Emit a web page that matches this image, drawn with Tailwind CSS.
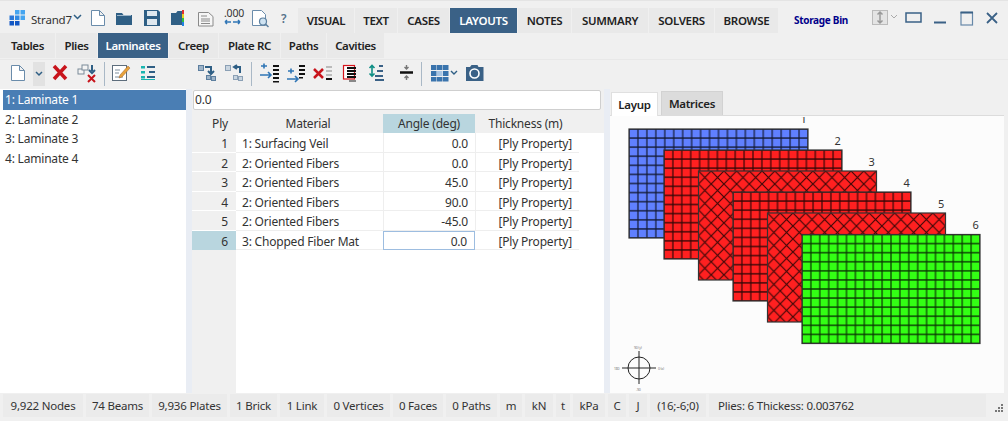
<!DOCTYPE html>
<html lang="en">
<head>
<meta charset="UTF-8">
<title>Strand7 - Laminates</title>
<script src="https://cdn.jsdelivr.net/npm/@tailwindcss/browser@4"></script>
</head>
<body class="bg-[#f0f0f0]">
<div class="w-[1008px] h-[421px] overflow-hidden flex flex-col bg-[#f0f0f0] text-[#222] text-[12px] tracking-[-0.2px] font-['Noto_Sans',sans-serif]">

  <!-- title bar -->
  <div class="h-[33px] flex items-end border-t border-[#e4e4e4]">
    <div class="w-[298px] h-[32px] relative">
      <svg width="298" height="32" viewBox="0 1 298 32">
        <!-- logo -->
        <rect x="15" y="10" width="4.500" height="4.500" fill="#45a5f0"/><rect x="20.500" y="10" width="4.500" height="4.500" fill="#45a5f0"/>
        <rect x="20.500" y="15.500" width="4.500" height="4.500" fill="#45a5f0"/><rect x="15" y="15.500" width="4.500" height="4.500" fill="#2f8ae4"/>
        <rect x="9.500" y="15.500" width="4.500" height="4.500" fill="#2a78d8"/>
        <rect x="9.500" y="21" width="4.500" height="4.500" fill="#1257c4"/><rect x="15" y="21" width="4.500" height="4.500" fill="#1257c4"/>
        <!-- new -->
        <path d="M91.500 10.500h8l5 5v10h-13z M99.500 10.500v5h5" fill="#fff" stroke="#6a8cab" stroke-width="1"/>
        <!-- open -->
        <path d="M116 13h6l1.500 2h8.500v10h-16z" fill="#2f5f85"/><path d="M117 15.500h14" stroke="#9db6ca"/>
        <!-- save -->
        <path d="M144 10h14l2 2v14h-16z" fill="#2f5f85"/><rect x="147" y="11" width="10" height="5" fill="#dfe8ef"/><rect x="147" y="19" width="10" height="6" fill="#dfe8ef"/>
        <!-- colour folder -->
        <path d="M171 13h5l1.500-2h5v14h-11.500z" fill="#2f5f85"/>
        <rect x="182" y="10" width="2" height="4" fill="#e03030"/><rect x="182" y="14" width="2" height="4" fill="#e8d020"/><rect x="182" y="18" width="2" height="4" fill="#30c040"/><rect x="182" y="22" width="2" height="4" fill="#2080e0"/>
        <!-- report -->
        <path d="M198.500 12.500h10l4.500 4v9.500h-14.500z" fill="#f6f6f6" stroke="#8a8a8a"/><path d="M201 16h6M201 19h9M201 21h9M201 23.500h9" stroke="#8a8a8a"/>
        <!-- number format -->
        <path d="M225 22h6M225 22l2-2M225 22l2 2M233 22h7M240 22l-2-2M240 22l-2 2" fill="none" stroke="#2f75b5" stroke-width="1.500"/>
        <!-- doc search -->
        <path d="M252.500 10.500h9l4 4v11h-13z" fill="#fff" stroke="#6a8cab"/><circle cx="263" cy="21.500" r="3.500" fill="#cfe3f2" stroke="#5b7f9f" stroke-width="1.200"/><path d="M265.500 24l3 3" stroke="#5b7f9f" stroke-width="1.500"/>
      </svg>
      <span class="absolute left-[31px] top-[10px] text-[11.500px] text-[#333]">Strand7</span>
      <svg class="absolute left-[73px] top-[13px]" width="9" height="6" viewBox="0 0 9 6"><path d="M1 1l3.500 3.500L8 1" fill="none" stroke="#2f5f85" stroke-width="1.500"/></svg>
      <span class="absolute left-[224px] top-[6px] text-[10.500px] leading-[12px] text-[#333]">.000</span>
      <span class="absolute left-[281px] top-[9px] text-[12px] text-[#56708a] font-semibold">?</span>
    </div>
    <div class="flex h-[25px] items-stretch font-semibold text-[11.500px] tracking-[-0.3px] gap-px">
      <div class="w-[56px] flex items-center justify-center bg-[#e9e9e9]">VISUAL</div>
      <div class="w-[42px] flex items-center justify-center bg-[#e9e9e9]">TEXT</div>
      <div class="w-[51px] flex items-center justify-center bg-[#e9e9e9]">CASES</div>
      <div class="w-[67px] flex items-center justify-center bg-[#3a6186] text-white">LAYOUTS</div>
      <div class="w-[53px] flex items-center justify-center bg-[#e9e9e9]">NOTES</div>
      <div class="w-[76px] flex items-center justify-center bg-[#e9e9e9]">SUMMARY</div>
      <div class="w-[65px] flex items-center justify-center bg-[#e9e9e9]">SOLVERS</div>
      <div class="w-[63px] flex items-center justify-center bg-[#e9e9e9]">BROWSE</div>
    </div>
    <div class="h-[25px] w-[76px] ml-[5px] flex items-center justify-center font-bold text-[10px] tracking-[-0.3px] text-[#00008b]">Storage Bin</div>
    <svg class="self-start mt-[8px] ml-[13px]" width="130" height="18" viewBox="0 0 130 18">
      <rect x="0.500" y="1.500" width="15" height="14" fill="#e4e4e4" stroke="#bbb"/>
      <path d="M8 3v11M5.500 5.500L8 3l2.500 2.500M5.500 11.500L8 14l2.500-2.500" fill="none" stroke="#999" stroke-width="1.500"/>
      <path d="M19 6l3 3 3-3" fill="none" stroke="#aaa"/>
      <rect x="34" y="4" width="15" height="9" fill="none" stroke="#3a6186" stroke-width="1.500"/>
      <path d="M62 13.500h12" stroke="#3a6186" stroke-width="2"/>
      <rect x="89" y="3.500" width="11.500" height="12.500" fill="none" stroke="#6688a8" stroke-width="1.200"/><path d="M88.500 3.500h12.500" stroke="#3a6186" stroke-width="2"/>
      <path d="M115 4l10 10M125 4l-10 10" stroke="#3a6186" stroke-width="1.800"/>
    </svg>
  </div>

  <!-- sub tabs -->
  <div class="h-[27px] flex items-stretch font-semibold text-[11.500px] tracking-[-0.4px] gap-px pb-px border-b border-[#e8e8e8]">
    <div class="w-[55px] flex items-center justify-center bg-[#e9e9e9]">Tables</div>
    <div class="w-[41px] flex items-center justify-center bg-[#e9e9e9]">Plies</div>
    <div class="w-[70px] flex items-center justify-center bg-[#3a6186] text-white">Laminates</div>
    <div class="w-[49px] flex items-center justify-center bg-[#e9e9e9]">Creep</div>
    <div class="w-[61px] flex items-center justify-center bg-[#e9e9e9]">Plate RC</div>
    <div class="w-[45px] flex items-center justify-center bg-[#e9e9e9]">Paths</div>
    <div class="w-[57px] flex items-center justify-center bg-[#e9e9e9]">Cavities</div>
  </div>

  <!-- toolbar icons -->
  <div class="h-[29px] flex">
    <svg width="186" height="29" viewBox="0 60 186 29">
      <path d="M11.500 65.500h8l5 5v10h-13z M19.500 65.500v5h5" fill="#fff" stroke="#6a8cab"/>
      <rect x="33" y="62" width="12" height="24" fill="#e2e2e2"/>
      <path d="M36 72l3 3 3-3" fill="none" stroke="#2f5f85" stroke-width="1.500"/>
      <path d="M54 66l12 13M66 66L54 79" stroke="#c8141c" stroke-width="3.500"/>
      <rect x="78" y="69" width="6" height="5" fill="#f4f4f4" stroke="#7a8a98"/><rect x="82" y="65" width="6" height="5" fill="#f4f4f4" stroke="#7a8a98"/>
      <path d="M92 65v6M89 70l3 3 3-3" fill="none" stroke="#2f5f85" stroke-width="2"/>
      <path d="M88 75l7 7M95 75l-7 7" stroke="#c8141c" stroke-width="2"/>
      <rect x="104" y="62" width="1" height="24" fill="#a9b8c6"/>
      <rect x="112.500" y="65.500" width="14" height="15" fill="#fff" stroke="#5d6d7c"/><path d="M115 70h5M115 73h4M115 77h8" stroke="#7d8d9c"/><path d="M120 75l8-9 2 2-8 9-3 1z" fill="#e8a33c" stroke="#a0622a" stroke-width="0.500"/>
      <path d="M141 66h4v2.500h-4zM141 71h4v2.500h-4zM141 76h4v2.500h-4z" fill="#19b5b0"/><path d="M147 67h8M149 72h6M147 77h8" stroke="#2f5f85" stroke-width="2"/><path d="M141 79.500h14" stroke="#19b5b0" stroke-width="1"/>
    </svg>
    <svg class="ml-[4px]" width="300" height="29" viewBox="190 60 300 29">
      <g fill="#9fb4c8" stroke="#5d7f9f"><rect x="198.500" y="65.500" width="5" height="5"/><rect x="206.500" y="75.500" width="4" height="4"/><rect x="211.500" y="76.500" width="4" height="4"/></g>
      <path d="M205 67h6v6M208 71l3 3 3-3" fill="none" stroke="#2f5f85" stroke-width="2"/>
      <g fill="#c9d5e0" stroke="#8ba0b5"><rect x="225.500" y="65.500" width="5" height="5"/><rect x="233.500" y="75.500" width="4" height="4"/><rect x="238.500" y="76.500" width="4" height="4"/></g>
      <path d="M240 73v-6h-6M237 69l-3-2 3-2" fill="none" stroke="#2f5f85" stroke-width="2"/>
      <rect x="251" y="62" width="1" height="24" fill="#a9b8c6"/>
      <path d="M261 66h6M264 63.500v5M260 75h11M268 72l3 3-3 3" fill="none" stroke="#2f75b5" stroke-width="1.600"/>
      <path d="M273 65h6v2h-6zM273 69h6v2h-6zM273 73h6v2h-6zM273 77h6v2h-6zM273 81h6v1.500h-6z" fill="#111"/>
      <path d="M288 71h6M291 68.500v5M287 79h11M295 76l3 3-3 3" fill="none" stroke="#2f75b5" stroke-width="1.600"/>
      <path d="M299 65h6v2h-6zM299 69h6v2h-6zM299 73h6v2h-6zM299 77h4v1.500h-4z" fill="#111"/>
      <path d="M314 69l9 9M323 69l-9 9" stroke="#c8141c" stroke-width="2.500"/>
      <path d="M326 66h6v2h-6zM326 70h6v2h-6zM326 74h6v2h-6z" fill="#bbb"/><path d="M326 78h6v2h-6z" fill="#111"/>
      <rect x="343.500" y="65.500" width="11" height="13.500" fill="#fff" stroke="#d8141c" stroke-width="1.200"/>
      <path d="M347 67h9v2h-9zM347 70h9v2h-9zM347 73h9v2h-9zM347 76h9v2h-9z" fill="#111"/><path d="M349 80h7v2h-7z" fill="#888"/>
      <path d="M372 66v10M369.500 68l2.500-2.500 2.500 2.500M369.500 73.500l2.500 2.500 2.500-2.500" fill="none" stroke="#0f8f85" stroke-width="1.600"/>
      <path d="M379 66h4M377 71h6M375 76h8M375 80h9" stroke="#3a6186" stroke-width="2"/>
      <path d="M400 72.500h13" stroke="#111" stroke-width="2.500"/>
      <path d="M406.500 65v4M404.500 67l2 2 2-2M406.500 80v-4M404.500 78l2-2 2 2" fill="none" stroke="#777" stroke-width="1.400"/>
      <rect x="421" y="62" width="1" height="24" fill="#a9b8c6"/>
      <g fill="#3a74ad"><rect x="431" y="65" width="5.500" height="5"/><rect x="437" y="65" width="5.500" height="5"/><rect x="443" y="65" width="5.500" height="5"/><rect x="431" y="71" width="5.500" height="5"/><rect x="443" y="71" width="5.500" height="5"/><rect x="431" y="77" width="5.500" height="4.500"/><rect x="437" y="77" width="5.500" height="4.500"/><rect x="443" y="77" width="5.500" height="4.500"/></g>
      <rect x="437" y="71" width="5.500" height="5" fill="#a9c6e4"/>
      <path d="M451 71l3 3 3-3" fill="none" stroke="#2f5f85" stroke-width="1.400"/>
      <path d="M466 67h4l1.500-2h6l1 2h5v14h-17.500z" fill="#3a6186"/><circle cx="474.500" cy="73.500" r="4.500" fill="#3a6186" stroke="#fff" stroke-width="1.600"/>
    </svg>
  </div>

  <!-- main -->
  <div class="flex-1 flex min-h-0 bg-[#f0f0f0]">
    <!-- laminates list -->
    <div class="w-[186px] h-[304px] pt-px bg-white pl-[3px] text-[#333]">
      <div class="h-[20px] pl-[2px] flex items-center bg-[#4a7eb4] text-white">1: Laminate 1</div>
      <div class="h-[19.500px] pl-[2px] flex items-center">2: Laminate 2</div>
      <div class="h-[19.500px] pl-[2px] flex items-center">3: Laminate 3</div>
      <div class="h-[19.500px] pl-[2px] flex items-center">4: Laminate 4</div>
    </div>
    <div class="w-[6px] h-[304px] bg-[#e9edf4]"></div>

    <!-- grid panel -->
    <div class="w-[412px] h-[304px] flex flex-col text-[#333]">
      <div class="h-[25px] pt-px pl-px">
        <div class="w-[408px] h-[20px] bg-white border border-[#cfcfcf] rounded-[2px] pl-[1px] flex items-center">0.0</div>
      </div>
      <div class="grid grid-cols-[44px_147px_92px_104px_25px] grid-rows-[19px_repeat(6,19.500px)] bg-white">
        <div class="bg-[#f0f0f0] flex items-center justify-end pr-[8px]">Ply</div>
        <div class="bg-[#f0f0f0] flex items-center justify-center pr-[3px]">Material</div>
        <div class="bg-[#b9d6df] flex items-center justify-center">Angle (deg)</div>
        <div class="bg-[#f0f0f0] flex items-center justify-center pr-[3px]">Thickness (m)</div>
        <div class="bg-[#f0f0f0]"></div>

        <div class="bg-[#f0f0f0] flex items-center justify-end pt-[4px] pr-[8px] border-b border-white">1</div>
        <div class="flex items-center pt-[4px] pl-[6px] border-b border-[#eee]">1: Surfacing Veil</div>
        <div class="flex items-center justify-end pt-[4px] pr-[7px] border-b border-l border-[#eee]">0.0</div>
        <div class="flex items-center justify-end pt-[4px] pr-[7px] border-b border-l border-[#eee]">[Ply Property]</div>
        <div></div>

        <div class="bg-[#f0f0f0] flex items-center justify-end pt-[4px] pr-[8px] border-b border-white">2</div>
        <div class="flex items-center pt-[4px] pl-[6px] border-b border-[#eee]">2: Oriented Fibers</div>
        <div class="flex items-center justify-end pt-[4px] pr-[7px] border-b border-l border-[#eee]">0.0</div>
        <div class="flex items-center justify-end pt-[4px] pr-[7px] border-b border-l border-[#eee]">[Ply Property]</div>
        <div></div>

        <div class="bg-[#f0f0f0] flex items-center justify-end pt-[4px] pr-[8px] border-b border-white">3</div>
        <div class="flex items-center pt-[4px] pl-[6px] border-b border-[#eee]">2: Oriented Fibers</div>
        <div class="flex items-center justify-end pt-[4px] pr-[7px] border-b border-l border-[#eee]">45.0</div>
        <div class="flex items-center justify-end pt-[4px] pr-[7px] border-b border-l border-[#eee]">[Ply Property]</div>
        <div></div>

        <div class="bg-[#f0f0f0] flex items-center justify-end pt-[4px] pr-[8px] border-b border-white">4</div>
        <div class="flex items-center pt-[4px] pl-[6px] border-b border-[#eee]">2: Oriented Fibers</div>
        <div class="flex items-center justify-end pt-[4px] pr-[7px] border-b border-l border-[#eee]">90.0</div>
        <div class="flex items-center justify-end pt-[4px] pr-[7px] border-b border-l border-[#eee]">[Ply Property]</div>
        <div></div>

        <div class="bg-[#f0f0f0] flex items-center justify-end pt-[4px] pr-[8px] border-b border-white">5</div>
        <div class="flex items-center pt-[4px] pl-[6px] border-b border-[#eee]">2: Oriented Fibers</div>
        <div class="flex items-center justify-end pt-[4px] pr-[7px] border-b border-l border-[#eee]">-45.0</div>
        <div class="flex items-center justify-end pt-[4px] pr-[7px] border-b border-l border-[#eee]">[Ply Property]</div>
        <div></div>

        <div class="bg-[#b9d6df] flex items-center justify-end pt-[4px] pr-[8px]">6</div>
        <div class="flex items-center pt-[4px] pl-[6px] border-b border-[#eee]">3: Chopped Fiber Mat</div>
        <div class="flex items-center justify-end pt-[4px] pr-[7px] border border-[#9dbde0]">0.0</div>
        <div class="flex items-center justify-end pt-[4px] pr-[7px] border-b border-[#eee]">[Ply Property]</div>
        <div></div>
      </div>
      <div class="flex-1 flex bg-white">
        <div class="w-[44px] bg-[#f0f0f0]"></div>
      </div>
    </div>
    <div class="w-[6px] h-[304px] bg-[#e9edf4]"></div>

    <!-- layup panel -->
    <div class="w-[394px] h-[304px] flex flex-col">
      <div class="h-[27px] flex items-end pl-[1px] gap-[3px] font-semibold text-[11.500px] tracking-[-0.3px] border-b border-[#dcdcdc]">
        <div class="w-[47px] h-[24px] flex items-center justify-center bg-white border border-b-0 border-[#e0e0e0] -mb-px">Layup</div>
        <div class="w-[62px] h-[24px] flex items-center justify-center bg-[#dcdcdc] border border-b-0 border-[#d2d2d2]">Matrices</div>
      </div>
      <div class="flex-1 bg-[#fcfcfc] min-h-0">
        <svg width="394" height="277" viewBox="610 115 394 277" class="block">
          <defs>
            <pattern id="gridBlue" x="629" y="128" width="8.950" height="9.083" patternUnits="userSpaceOnUse">
              <path d="M0 0H8.950V9.083H0Z" fill="none" stroke="#000" stroke-opacity="0.8" stroke-width="1.200"/>
            </pattern>
            <pattern id="gridRed" x="664" y="149" width="8.900" height="9.083" patternUnits="userSpaceOnUse">
              <path d="M0 0H8.900V9.083H0Z" fill="none" stroke="#000" stroke-opacity="0.8" stroke-width="1.200"/>
            </pattern>
            <pattern id="gridRed4" x="733" y="191" width="8.900" height="9.083" patternUnits="userSpaceOnUse">
              <path d="M0 0H8.900V9.083H0Z" fill="none" stroke="#000" stroke-opacity="0.8" stroke-width="1.200"/>
            </pattern>
            <pattern id="gridGreen" x="802" y="233.500" width="8.900" height="9.083" patternUnits="userSpaceOnUse">
              <path d="M0 0H8.900V9.083H0Z" fill="none" stroke="#000" stroke-opacity="0.8" stroke-width="1.200"/>
            </pattern>
            <pattern id="hatch3" x="698.500" y="170" width="12.710" height="12.970" patternUnits="userSpaceOnUse">
              <path d="M0 0L12.710 12.970M12.710 0L0 12.970" fill="none" stroke="#000" stroke-opacity="0.75" stroke-width="1.200"/>
            </pattern>
            <pattern id="hatch5" x="767.500" y="212" width="12.710" height="12.970" patternUnits="userSpaceOnUse">
              <path d="M0 0L12.710 12.970M12.710 0L0 12.970" fill="none" stroke="#000" stroke-opacity="0.75" stroke-width="1.200"/>
            </pattern>
          </defs>
          <g font-family="Noto Sans, sans-serif" font-size="11" fill="#333" text-anchor="middle">
            <svg x="610" y="116" width="394" height="276" viewBox="610 116 394 276">
              <text x="803.500" y="122">1</text>
            </svg>
            <text x="837.500" y="143.500">2</text>
            <text x="871.500" y="164.500">3</text>
            <text x="906.500" y="185.500">4</text>
            <text x="941" y="206.500">5</text>
            <text x="975.500" y="227.500">6</text>
          </g>
          <rect x="629" y="128" width="179" height="109" fill="#6080ff"/>
          <rect x="629" y="128" width="179" height="109" fill="url(#gridBlue)" stroke="#333" stroke-width="1.200"/>
          <rect x="664" y="149" width="178" height="109" fill="#ff2020"/>
          <rect x="664" y="149" width="178" height="109" fill="url(#gridRed)" stroke="#333" stroke-width="1.200"/>
          <rect x="698.500" y="170" width="178" height="109" fill="#ff2020"/>
          <rect x="698.500" y="170" width="178" height="109" fill="url(#hatch3)" stroke="#333" stroke-width="1.200"/>
          <rect x="733" y="191" width="178" height="109" fill="#ff2020"/>
          <rect x="733" y="191" width="178" height="109" fill="url(#gridRed4)" stroke="#333" stroke-width="1.200"/>
          <rect x="767.500" y="212" width="178" height="109" fill="#ff2020"/>
          <rect x="767.500" y="212" width="178" height="109" fill="url(#hatch5)" stroke="#333" stroke-width="1.200"/>
          <rect x="802" y="233.500" width="178" height="109" fill="#33ff14"/>
          <rect x="802" y="233.500" width="178" height="109" fill="url(#gridGreen)" stroke="#333" stroke-width="1.200"/>
          <!-- compass -->
          <circle cx="639" cy="367" r="11" fill="none" stroke="#222"/>
          <path d="M622 367H656M639 350V383" stroke="#222"/>
          <g font-family="Noto Sans, sans-serif" font-size="3.500" fill="#777">
            <text x="634" y="348">90 (y)</text>
            <text x="614" y="368.500">180</text>
            <text x="658" y="368.500">0 (x)</text>
            <text x="636" y="389.500">-90</text>
          </g>
        </svg>
      </div>
    </div>
  </div>

  <!-- status bar -->
  <div class="h-[28px] pl-[3px] flex gap-[3px] pt-[1px] pb-[4px] text-[#333] text-[11.500px] relative">
    <div class="w-[80px] flex items-center justify-center bg-[#ebebeb]">9,922 Nodes</div>
    <div class="w-[63px] flex items-center justify-center bg-[#ebebeb]">74 Beams</div>
    <div class="w-[75px] flex items-center justify-center bg-[#ebebeb]">9,936 Plates</div>
    <div class="w-[47px] flex items-center justify-center bg-[#ebebeb]">1 Brick</div>
    <div class="w-[44px] flex items-center justify-center bg-[#ebebeb]">1 Link</div>
    <div class="w-[63px] flex items-center justify-center bg-[#ebebeb]">0 Vertices</div>
    <div class="w-[50px] flex items-center justify-center bg-[#ebebeb]">0 Faces</div>
    <div class="w-[51px] flex items-center justify-center bg-[#ebebeb]">0 Paths</div>
    <div class="w-[22px] flex items-center justify-center bg-[#ebebeb]">m</div>
    <div class="w-[28px] flex items-center justify-center bg-[#ebebeb]">kN</div>
    <div class="w-[14px] flex items-center justify-center bg-[#ebebeb]">t</div>
    <div class="w-[32px] flex items-center justify-center bg-[#ebebeb]">kPa</div>
    <div class="w-[18px] flex items-center justify-center bg-[#ebebeb]">C</div>
    <div class="w-[18px] flex items-center justify-center bg-[#ebebeb]">J</div>
    <div class="w-[56px] flex items-center justify-center bg-[#ebebeb]">(16;-6;0)</div>
    <div class="w-[277px] flex items-center pl-[9px] bg-[#ebebeb]">Plies: 6 Thickess: 0.003762</div>
    <svg class="absolute left-[994px] top-[11px]" width="10" height="10" viewBox="0 0 10 10"><path d="M7 0h2v2H7zM4 3h2v2H4zM7 3h2v2H7zM1 6h2v2H1zM4 6h2v2H4zM7 6h2v2H7z" fill="#777"/></svg>
  </div>
</div>
</body>
</html>
